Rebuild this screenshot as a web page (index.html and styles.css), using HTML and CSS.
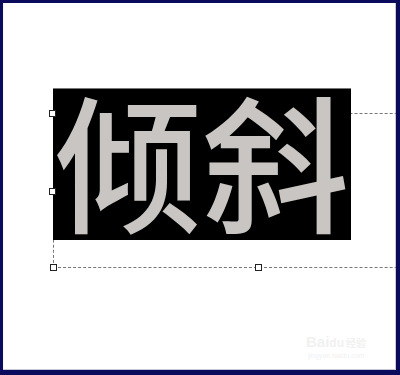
FILE: index.html
```
<!DOCTYPE html>
<html lang="zh">
<head>
<meta charset="utf-8">
<link rel="stylesheet" href="styles.css">
</head>
<body>
<div class="frame">
  <div class="canvas">
    <div class="textbox">倾斜</div>
    <div class="selection">
      <span class="handle h-tl"></span>
      <span class="handle h-ml"></span>
      <span class="handle h-bl"></span>
      <span class="handle h-bm"></span>
    </div>
    <div class="watermark">
      <div class="wm-logo">Bai<span class="du">du</span><span class="jy">经验</span></div>
      <div class="wm-url">jingyan.baidu.com</div>
    </div>
  </div>
</div>
</body>
</html>
```
FILE: styles.css
```
html, body {
  margin: 0;
  padding: 0;
  background: #ffffff;
}
.frame {
  box-sizing: border-box;
  width: 400px;
  height: 375px;
  border-style: solid;
  border-color: #0b0b5e;
  border-width: 3px 4px 5px 3px;
  overflow: hidden;
}
.canvas {
  position: relative;
  box-sizing: border-box;
  width: 100%;
  height: 100%;
  padding: 85px 0 0 50px;
  background: #fff;
  box-shadow: inset -1px -1px 0 #c8c8d8;
}
.textbox {
  position: relative;
  z-index: 1;
  width: 298px;
  height: 152px;
  padding-left: 2px;
  background: #000;
  border-top: 1px solid #777;
  box-sizing: border-box;
  color: #c9c5c2;
  font-family: "Noto Sans CJK SC", sans-serif;
  font-weight: 500;
  font-size: 147px;
  line-height: 136px;
  white-space: nowrap;
}
.selection {
  position: absolute;
  left: 50px;
  top: 110px;
  width: 410px;
  height: 155px;
  border: 1px dashed #777;
  box-sizing: border-box;
}
.handle {
  position: absolute;
  z-index: 2;
  width: 5px;
  height: 5px;
  border: 1px solid #222;
  background: #fff;
}
.h-tl { left: -5px; top: -4px; }
.h-ml { left: -5px; top: 74px; }
.h-bl { left: -4px; bottom: -4px; }
.h-bm { left: 201px; bottom: -4px; }
.watermark {
  position: absolute;
  left: 303px;
  top: 331px;
  color: #f1f1f1;
  font-family: "Liberation Sans", sans-serif;
}
.wm-logo {
  font-size: 15px;
  font-weight: bold;
  line-height: 16px;
}
.du {
  font-size: 12px;
}
.jy {
  font-family: "Noto Sans CJK SC", sans-serif;
  font-size: 10px;
  margin-left: 2px;
}
.wm-url {
  font-size: 7px;
  line-height: 10px;
  margin-left: 2px;
}
```
